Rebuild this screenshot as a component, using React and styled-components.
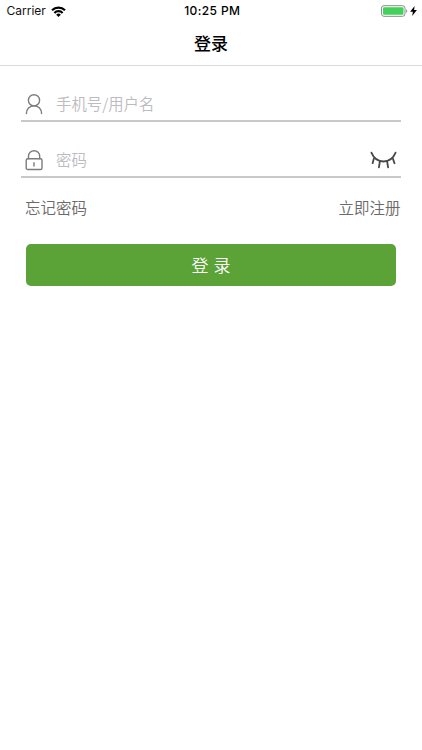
import React, { useState } from 'react';
import styled, { createGlobalStyle } from 'styled-components';

const GlobalStyle = createGlobalStyle`
  * { box-sizing: border-box; }
  body {
    margin: 0;
    background: #fff;
    font-family: "Noto Sans CJK SC", sans-serif;
  }
`;

const Screen = styled.main`
  width: 100%;
  height: 750px;
  background: #fff;
  overflow: hidden;
`;

const StatusBar = styled.div`
  display: grid;
  grid-template-columns: 1fr auto 1fr;
  align-items: center;
  height: 22px;
  padding: 0 5px 0 6.5px;
  font-family: Inter, sans-serif;
  font-size: 12px;
  line-height: 22px;
  color: #111;
`;

const StatusGroup = styled.div`
  display: flex;
  align-items: center;
  justify-content: ${(p) => (p.$end ? 'flex-end' : 'flex-start')};
  gap: ${(p) => (p.$end ? '2px' : '5px')};
`;

const Carrier = styled.span`
  letter-spacing: 0;
`;

const Clock = styled.span`
  font-weight: 500;
  font-size: 12px;
  letter-spacing: 0.4px;
  padding-left: 1px;
  color: #000;
`;

const NavBar = styled.header`
  display: flex;
  align-items: center;
  justify-content: center;
  height: 44px;
  padding-bottom: 2px;
  border-bottom: 1px solid #dadada;
`;

const Title = styled.h1`
  margin: 0;
  font-size: 17px;
  font-weight: 500;
  line-height: 24px;
  color: #000;
`;

const Form = styled.form`
  display: flex;
  flex-direction: column;
  padding: 0 21px;
`;

const Field = styled.label`
  display: flex;
  align-items: center;
  height: 56px;
  padding: 21px 4px 0 4px;
  border-bottom: 2px solid #c8c8c8;
`;

const FieldIcon = styled.span`
  display: flex;
  width: 18px;
  margin-right: 13px;
`;

const Input = styled.input`
  flex: 1;
  min-width: 0;
  height: 26px;
  padding: 0 0 2px;
  border: 0;
  outline: 0;
  background: transparent;
  font-family: inherit;
  font-size: 15.4px;
  font-weight: 350;
  color: #333;
  &::placeholder { color: #bcbcc0; opacity: 1; }
`;

const EyeButton = styled.button`
  display: flex;
  padding: 0;
  border: 0;
  background: none;
`;

const Links = styled.nav`
  display: flex;
  justify-content: space-between;
  padding: 17px 0.5px 0 4px;
`;

const TextLink = styled.a`
  font-size: 15.5px;
  font-weight: 350;
  line-height: 24px;
  color: #6a6a6a;
`;

const Submit = styled.button`
  height: 42.5px;
  margin: 24.75px 5px 0;
  padding: 0 0 1px;
  border: 0;
  border-radius: 5px;
  background: #5ba237;
  color: #fff;
  font-family: inherit;
  font-size: 17px;
  font-weight: 350;
  line-height: 41px;
  word-spacing: 1px;
`;

const WifiIcon = () => (
  <svg width="15" height="11" viewBox="0 0 15 11" fill="none" stroke="#000" strokeWidth="2.2">
    <path d="M1 4.2a9.3 9.3 0 0 1 13 0" />
    <path d="M3.4 6.9a5.7 5.7 0 0 1 8.2 0" />
    <path d="M7.5 11 5.2 8.7a3.2 3.2 0 0 1 4.6 0Z" fill="#000" stroke="none" />
  </svg>
);

const BatteryIcon = () => (
  <svg width="27" height="12" viewBox="0 0 27 12">
    <rect x="0.5" y="0.7" width="23.5" height="10.6" rx="2.5" fill="none" stroke="#8a8a8a" />
    <rect x="2" y="2.2" width="20.5" height="7.6" rx="1.2" fill="#43d159" />
    <path d="M25.2 4.2c1.4.5 1.4 3.1 0 3.6Z" fill="#8a8a8a" />
  </svg>
);

const BoltIcon = () => (
  <svg width="7" height="10" viewBox="0 0 7 10">
    <path d="M4.6 0 0.1 5.7H2.9L2.2 10 6.9 4H4.1Z" fill="#000" />
  </svg>
);

const UserIcon = () => (
  <svg width="18" height="22" viewBox="0 0 18 22" fill="none" stroke="#7c7c7c" strokeWidth="1.4" strokeLinecap="round">
    <circle cx="9" cy="7.3" r="5.6" />
    <path d="M1.4 20.6C1.4 16 4.5 12.9 9 12.9s7.6 3.1 7.6 7.7" />
  </svg>
);

const LockIcon = () => (
  <svg width="18" height="22" viewBox="0 0 18 22" fill="none" stroke="#7c7c7c" strokeWidth="1.4" strokeLinecap="round">
    <rect x="1.2" y="9.7" width="15.8" height="10.8" rx="1.6" />
    <path d="M3.5 9.7V7.3a5.6 5.6 0 0 1 11.2 0v2.4M9 13.8v3.2" />
  </svg>
);

const ClosedEyeIcon = () => (
  <svg width="27" height="18" viewBox="0 0 27 18" fill="none" stroke="#484848" strokeWidth="1.8" strokeLinecap="round">
    <path d="M1.4 1.7C3.6 7 8 10.5 13.5 10.5S23.4 7 25.6 1.7" />
    <path d="M3.9 7.6 2.6 12.2M9.9 10.3 8.9 16.3M17.1 10.3l1 6M22.9 7.6l1.6 4.6" />
  </svg>
);

export default function App() {
  const [visible, setVisible] = useState(false);
  return (
    <Screen>
      <GlobalStyle />
      <StatusBar>
        <StatusGroup>
          <Carrier>Carrier</Carrier>
          <WifiIcon />
        </StatusGroup>
        <Clock>10:25 PM</Clock>
        <StatusGroup $end>
          <BatteryIcon />
          <BoltIcon />
        </StatusGroup>
      </StatusBar>
      <NavBar>
        <Title>登录</Title>
      </NavBar>
      <Form onSubmit={(e) => e.preventDefault()}>
        <Field>
          <FieldIcon><UserIcon /></FieldIcon>
          <Input type="text" placeholder="手机号/用户名" />
        </Field>
        <Field>
          <FieldIcon><LockIcon /></FieldIcon>
          <Input type={visible ? 'text' : 'password'} placeholder="密码" />
          <EyeButton type="button" onClick={() => setVisible(!visible)}>
            <ClosedEyeIcon />
          </EyeButton>
        </Field>
        <Links>
          <TextLink>忘记密码</TextLink>
          <TextLink>立即注册</TextLink>
        </Links>
        <Submit type="submit">登 录</Submit>
      </Form>
    </Screen>
  );
}
